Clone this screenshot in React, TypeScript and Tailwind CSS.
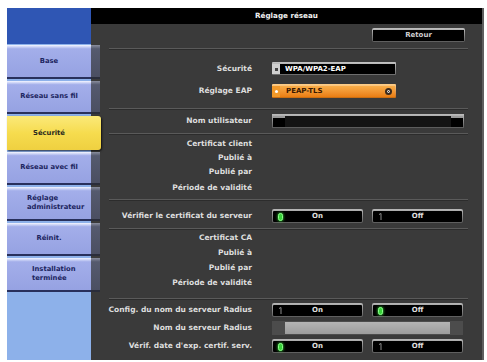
import React from "react";

const txt = "font-['DejaVu_Sans',Verdana,sans-serif] font-bold";

function NavBtn({ label, active, lines, pl }: { label: string; active?: boolean; lines?: string[]; pl?: string }) {
  const content = lines ? (
    <div className={`w-full text-left leading-[9px] ${pl}`}>
      {lines.map((l) => (
        <div key={l}>{l}</div>
      ))}
    </div>
  ) : (
    <span>{label}</span>
  );
  if (active) {
    return (
      <div className={`h-[33.5px] w-[94px] rounded-r-[3px] bg-gradient-to-b from-[#fbe978] via-[#f6dc4e] to-[#efd040] shadow-[1px_1px_2px_rgba(0,0,0,0.7)] flex items-center justify-center pr-[10px] text-[6.8px] text-[#2a2a20] ${txt}`}>
        {content}
      </div>
    );
  }
  return (
    <div className="h-[33.5px] w-[93px] flex">
      <div className={`w-[84px] flex items-center justify-center bg-gradient-to-b from-[#f4f6ff] from-[0%] via-[#a3aeea] via-[12%] to-[#96a2e2] border-b-[2px] border-b-[#28305c] text-[6.8px] text-[#1c2560] ${txt}`}>
        {content}
      </div>
      <div className="w-[9px] bg-gradient-to-b from-[#8a8e9e] via-[#555a6e] via-[12%] to-[#4b4f62] border-b-[2px] border-b-[#2a2d3a]" />
    </div>
  );
}

function Indicator({ on }: { on: boolean }) {
  if (on)
    return <div className="ml-[5px] w-[5px] h-[8px] rounded-full bg-[#39d23a] shadow-[0_0_3px_#4cff4c] border border-[#8bff8b]" />;
  return (
    <svg className="ml-[5px]" width="5" height="9" viewBox="0 0 5 9">
      <path d="M1 2.5 L3 1.5 L3 8" stroke="#8c8c8c" strokeWidth="1" fill="none" />
    </svg>
  );
}

function Switch({ label, on }: { label: string; on: boolean }) {
  return (
    <div className="w-[91px] h-[14px] rounded-[2px] bg-gradient-to-b from-[#b8b8b8] to-[#5c5c5c] pt-[2px] px-[1px] pb-[1px]">
      <div className="h-full w-full bg-black rounded-[1px] flex items-center">
        <Indicator on={on} />
        <span className={`flex-1 text-center pr-[10px] text-[7px] text-[#e0e0e0] ${txt}`}>{label}</span>
      </div>
    </div>
  );
}

function Row({ label, h, children }: { label: string; h: string; children?: React.ReactNode }) {
  return (
    <div className={`flex items-center ${h}`}>
      <div className={`w-[161px] shrink-0 text-right text-[7.5px] text-[#dedede] leading-none whitespace-nowrap ${txt}`}>{label}</div>
      <div className="ml-[20px] flex items-center gap-[9px]">{children}</div>
    </div>
  );
}

function Sep({ mt }: { mt: string }) {
  return <div className={`${mt} ml-[18px] mr-[14px] h-px bg-[#5a5a5a] shadow-[0_1px_0_#2c2c2c]`} />;
}

export default function App() {
  return (
    <div className="w-[487px] h-[362px] bg-white pt-[8px] pl-[7px] pr-[3px] pb-[2px]">
      <div className="flex h-[352px]">
        {/* Sidebar */}
        <div className="relative z-10 w-[84px] shrink-0 bg-[#8db1ea] flex flex-col">
          <div className="h-[36px] bg-[#2f56b4]" />
          <div className="mt-[1px] flex flex-col gap-[2px]">
            <NavBtn label="Base" />
            <NavBtn label="Réseau sans fil" />
            <NavBtn label="Sécurité" active />
            <NavBtn label="Réseau avec fil" />
            <NavBtn label="" lines={["Réglage", "administrateur"]} pl="pl-[20px]" />
            <NavBtn label="Réinit." />
            <NavBtn label="" lines={["Installation", "terminée"]} pl="pl-[25px]" />
          </div>
        </div>
        {/* Main */}
        <div className="flex-1 flex flex-col bg-[#3a3a3a] border-r-[2px] border-r-[#5e5e5e]">
          <div className={`h-[16px] bg-black flex items-center justify-center text-[7.2px] text-[#f0f0f0] ${txt}`}>
            Réglage réseau
          </div>
          {/* Retour */}
          <div className="mt-[4px] flex pl-[281px]">
            <div className="w-[93px] h-[14px] rounded-[2px] bg-gradient-to-b from-[#c0c0c0] to-[#5c5c5c] pt-[2px] px-[1px] pb-[1px]">
              <div className={`h-full bg-black flex items-center justify-center text-[7px] text-[#d0d0d0] ${txt}`}>
                Retour
              </div>
            </div>
          </div>
          <Sep mt="mt-[6px]" />
          <div className="mt-[13px]">
            <Row label="Sécurité" h="h-[13px]">
              <div className="w-[124px] h-[13px] flex rounded-[1px] overflow-hidden bg-gradient-to-b from-[#c4c4c4] to-[#6a6a6a] pt-[2px] pr-[1px] pb-[1px]">
                <div className="w-[8px] bg-[#cfcfcf] flex items-center justify-center">
                  <div className="w-[3px] h-[3px] bg-[#444]" />
                </div>
                <div className={`flex-1 bg-black flex items-center pl-[5px] text-[7px] text-white ${txt}`}>WPA/WPA2-EAP</div>
              </div>
            </Row>
          </div>
          <div className="mt-[9px]">
            <Row label="Réglage EAP" h="h-[14px]">
              <div className="w-[124px] h-[14px] flex rounded-[1px] overflow-hidden bg-gradient-to-b from-[#ffd08a] to-[#c86a08] pt-[2px] pr-[1px] pb-[1px]">
                <div className="w-[8px] bg-[#f29a2a] flex items-center justify-center">
                  <div className="w-[3px] h-[3px] rounded-full bg-white" />
                </div>
                <div className={`flex-1 bg-gradient-to-b from-[#f9ae48] to-[#ea7d10] flex items-center pl-[6px] pr-[3px] text-[7px] text-[#3a1800] ${txt}`}>
                  <span className="flex-1">PEAP-TLS</span>
                  <div className="w-[7px] h-[7px] rounded-full bg-[#3b2a1c] flex items-center justify-center">
                    <div className="w-[3px] h-[3px] rounded-full border border-white" />
                  </div>
                </div>
              </div>
            </Row>
          </div>
          <Sep mt="mt-[10px]" />
          <div className="mt-[5px]">
            <Row label="Nom utilisateur" h="h-[14px]">
              <div className="w-[192px] h-[14px] bg-gradient-to-b from-[#bdbdbd] to-[#5a5a5a] pt-[2px] px-[1px] pb-[1px] flex">
                <div className="w-[12px] bg-black border-t-[2px] border-t-[#9a9a9a]" />
                <div className="flex-1 bg-[#141414]" />
                <div className="w-[12px] bg-black border-t-[2px] border-t-[#9a9a9a]" />
              </div>
            </Row>
          </div>
          <Sep mt="mt-[5px]" />
          <div className="mt-[3px]">
            <Row label="Certificat client" h="h-[14px]" />
            <Row label="Publié à" h="h-[14px]" />
            <Row label="Publié par" h="h-[14px]" />
            <Row label="Période de validité" h="h-[17px]" />
          </div>
          <Sep mt="mt-[3px]" />
          <div className="mt-[9px]">
            <Row label="Vérifier le certificat du serveur" h="h-[14px]">
              <Switch label="On" on />
              <Switch label="Off" on={false} />
            </Row>
          </div>
          <Sep mt="mt-[5px]" />
          <div className="mt-[1px]">
            <Row label="Certificat CA" h="h-[15px]" />
            <Row label="Publié à" h="h-[15px]" />
            <Row label="Publié par" h="h-[15px]" />
            <Row label="Période de validité" h="h-[15px]" />
          </div>
          <Sep mt="mt-[8px]" />
          <div className="mt-[4px]">
            <Row label="Config. du nom du serveur Radius" h="h-[14px]">
              <Switch label="On" on={false} />
              <Switch label="Off" on />
            </Row>
          </div>
          <div className="mt-[4px]">
            <Row label="Nom du serveur Radius" h="h-[14px]">
              <div className="w-[191px] h-[14px] bg-[#4c4c4c] flex px-[13px] py-[1px]">
                <div className="flex-1 bg-gradient-to-b from-[#b4b4b4] to-[#9c9c9c]" />
              </div>
            </Row>
          </div>
          <div className="mt-[4px]">
            <Row label="Vérif. date d'exp. certif. serv." h="h-[14px]">
              <Switch label="On" on />
              <Switch label="Off" on={false} />
            </Row>
          </div>
        </div>
      </div>
    </div>
  );
}
